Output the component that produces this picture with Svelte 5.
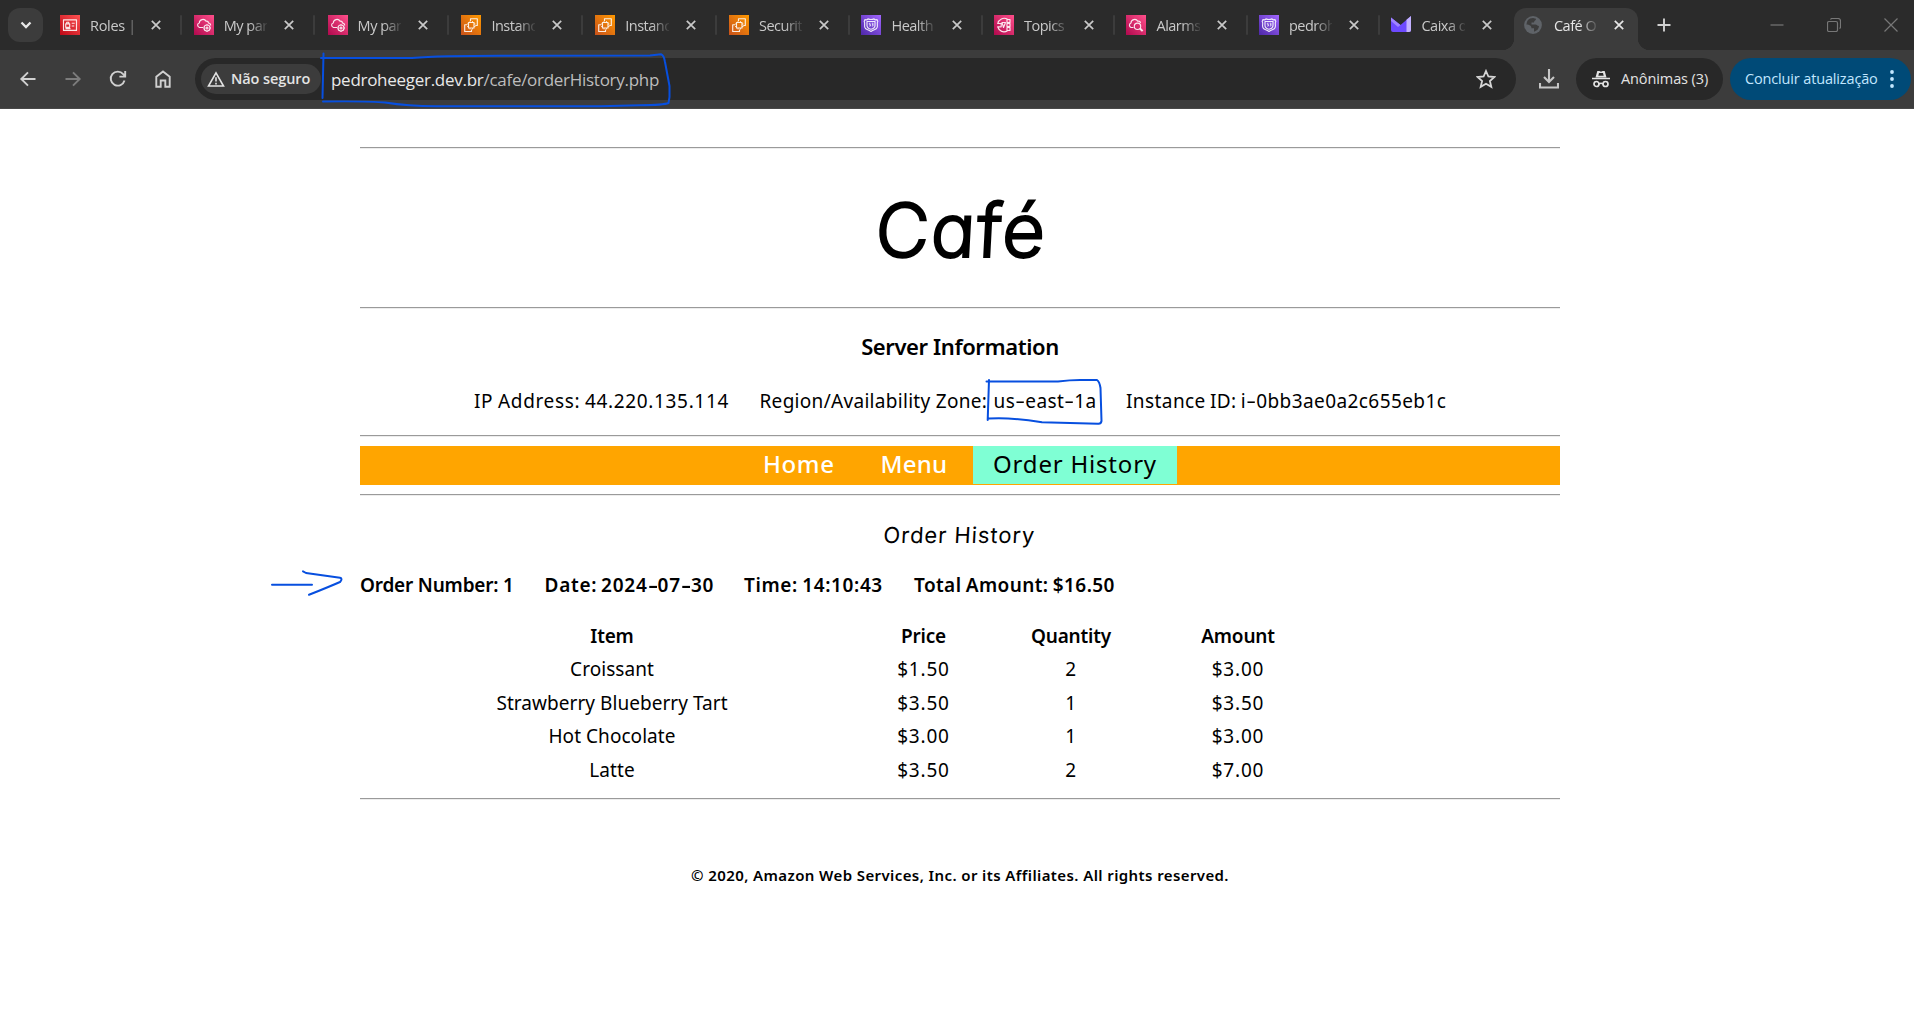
<script>
  const tabs = [
    { icon: 'iam', title: 'Roles |' },
    { icon: 'cloud', title: 'My par' },
    { icon: 'cloud', title: 'My par' },
    { icon: 'ec2', title: 'Instanc' },
    { icon: 'ec2', title: 'Instanc' },
    { icon: 'ec2', title: 'Securit' },
    { icon: 'route', title: 'Health' },
    { icon: 'sns', title: 'Topics' },
    { icon: 'watch', title: 'Alarms' },
    { icon: 'route', title: 'pedroh' },
    { icon: 'mail', title: 'Caixa d' },
    { icon: 'globe', title: 'Café O', active: true }
  ];
  const fills = {
    iam: 'url(#red)', cloud: 'url(#pink)', ec2: 'url(#orange)',
    route: 'url(#purple)', sns: 'url(#pink)', watch: 'url(#pink)'
  };
  const rows = [
    ['Croissant', '$1.50', '2', '$3.00'],
    ['Strawberry Blueberry Tart', '$3.50', '1', '$3.50'],
    ['Hot Chocolate', '$3.00', '1', '$3.00'],
    ['Latte', '$3.50', '2', '$7.00']
  ];
</script>

<svg class="defs" width="0" height="0">
  <defs>
    <linearGradient id="red" x1="0" y1="1" x2="1" y2="0"><stop offset="0" stop-color="#bd0816" /><stop offset="1" stop-color="#ff5252" /></linearGradient>
    <linearGradient id="pink" x1="0" y1="1" x2="1" y2="0"><stop offset="0" stop-color="#b0084d" /><stop offset="1" stop-color="#ff4f8b" /></linearGradient>
    <linearGradient id="orange" x1="0" y1="1" x2="1" y2="0"><stop offset="0" stop-color="#c8511b" /><stop offset="1" stop-color="#ff9900" /></linearGradient>
    <linearGradient id="purple" x1="0" y1="1" x2="1" y2="0"><stop offset="0" stop-color="#4d27a8" /><stop offset="1" stop-color="#a166ff" /></linearGradient>
  </defs>
</svg>

<div class="browser">
  <header class="strip">
    <button class="search" aria-label="Tabs">
      <svg width="12" height="8" viewBox="0 0 12 8"><path d="M1.5 1.5 6 6l4.500-4.500" fill="none" stroke="#e8e8e8" stroke-width="2.300" /></svg>
    </button>
    <div class="tabs">
      {#each tabs as tab, i}
        <div class="tab" class:wide={i < 5} class:active={tab.active} class:divided={i < 10}>
          <svg class="fav" viewBox="0 0 20 20">
            {#if fills[tab.icon]}<rect width="20" height="20" fill={fills[tab.icon]} />{/if}
            <g fill="none" stroke="#fff" stroke-opacity=".88" stroke-width="1.150" stroke-linejoin="round">
              {#if tab.icon === 'iam'}
                <path d="M3.500 4.800h13v10.600h-13zM5.700 8.800h4v3.500h-4zM6.700 8.700V7.200h2v1.500M11.700 8.200h3M11.700 11h2.500M5.500 13.600h5" />
              {:else if tab.icon === 'cloud'}
                <path d="M9 12.500H5.500C3 11.500 3 8.500 5.300 8c0-3.500 5-5 6.800-1.700 1.500-.5 2.300.5 2.300 1.700 2 .3 2.300 1.500 2.200 2.500" />
                <circle cx="13" cy="13" r="3" /><circle cx="13" cy="13" r="1" /><path d="M13 9.200v1M13 16v1M9.500 13h1M16 13h1" />
              {:else if tab.icon === 'ec2'}
                <path d="M7.500 7.500h5.500v5.500H7.500zM9.500 6V3.700h6.800v6.800h-2M10.500 14.500v2H3.700V9.700H6" />
                <path d="M9 6v1.500M11.500 6v1.500M9 13v1.500M11.500 13v1.500M6 9h1.500M6 11.500h1.500M13 9h1.500M13 11.500h1.500" stroke-width=".8" />
              {:else if tab.icon === 'route'}
                <path d="M4 4.500c1 .6 2.300.4 3-.6 2 .8 4 .8 6 0 .7 1 2 1.200 3 .6l.8 2c-1.600 2 1 5-1.300 7-1.600 1.500-3.500 1.500-5.500 3-2-1.500-3.900-1.500-5.500-3-2.300-2 .3-5-1.300-7z" />
                <path d="M6 6.500h8v4c0 2-2 3.300-4 3.800-2-.5-4-1.800-4-3.800z" /><path d="M9.500 8.200H8.300v1.200h1.200v1.600H8M10.800 8.200H12v2.800h-1.200M11 9.600h1" stroke-width=".8" />
              {:else if tab.icon === 'sns'}
                <path d="M13.500 4.300C9.500 1.800 4.500 4.500 3.800 8.500M3.800 12c1.200 4.500 6 6 9.700 3.700M3.200 8.500h4v3.300h-4M8 7.500h3.500L9.500 12.500zM13 4.500h3v3h-3zM13 8.500h3v3h-3zM13 12.500h3v3h-3z" />
              {:else if tab.icon === 'watch'}
                <path d="M7.500 12.500H5C3 11.500 2.800 8.800 5 8c0-3.500 5-5 6.800-1.700 1.700-.5 2.600.5 2.600 1.700" /><circle cx="11.500" cy="11.300" r="3.200" /><path d="m14 13.500 2.600 2.600" stroke-width="2" />
              {/if}
            </g>
            {#if tab.icon === 'mail'}
              <path d="M0 2.500 9.500 10 20 1v14a2 2 0 0 1-2 2H2a2 2 0 0 1-2-2z" fill="#6d4aff" />
              <path d="M15.500 4.800 20 1v14a2 2 0 0 1-2 2h-2.500z" fill="#c3b1ff" /><path d="M0 2.500 9.500 10 7 12 0 6z" fill="#9f84ff" />
            {:else if tab.icon === 'globe'}
              <circle cx="9" cy="10" r="8.900" fill="#5f6368" />
              <path d="M6 3.500 9 3l3 .8c0 2-2 1.700-2 3.700H7.500v2h4c1.500 0 1.500 1.500 3.500 1.500-.2 3-2 4.800-5 5.700v-3.500H7.500c0-3-2.500-3.200-5-3.700.2-3 1.300-5 3.500-6z" fill="#3c3c3c" />
            {/if}
          </svg>
          <span class="title" class:solid={i === 0}>{tab.title}</span>
          <svg class="close" width="10" height="10" viewBox="0 0 10 10"><path d="m.8.8 8.400 8.400m0-8.400L.8 9.200" stroke="currentColor" stroke-width="1.700" /></svg>
        </div>
      {/each}
    </div>
    <svg class="plus" width="14" height="14" viewBox="0 0 14 14"><path d="M7 .5v13M.5 7h13" stroke="#d0d0d0" stroke-width="1.900" /></svg>
    <div class="window">
      <svg width="14" height="14" viewBox="0 0 14 14"><path d="M.5 7h13" /></svg>
      <svg width="14" height="14" viewBox="0 0 14 14"><rect x=".5" y="3.500" width="10" height="10" rx="1.500" /><path d="M3.500 1.500Q4 .5 5 .5h6q2.500 0 2.500 2.500v6q0 1-1 1.500" /></svg>
      <svg width="14" height="14" viewBox="0 0 14 14"><path d="m.5.5 13 13m0-13-13 13" /></svg>
    </div>
  </header>

  <div class="toolbar">
    <nav class="controls">
      <svg viewBox="0 0 20 20"><path d="M17.500 10H3.500M10 3.300 3.300 10l6.700 6.700" /></svg>
      <svg class="dim" viewBox="0 0 20 20"><path d="M2.500 10h14M10 3.300l6.700 6.700-6.700 6.700" /></svg>
      <svg viewBox="0 0 20 20"><path d="M16.500 11.500A7 7 0 1 1 15.200 5.200L17 7.200M17.200 2v5.600h-5.800" /></svg>
      <svg viewBox="0 0 20 20"><path d="M3.300 17.800V7.700L10 2.500l6.700 5.200v10.100h-4.400v-6.300H7.700v6.300z" /></svg>
    </nav>
    <div class="address">
      <span class="chip">
        <svg width="18" height="16" viewBox="0 0 18 16"><path d="M9 1.800 16.500 15h-15zM9 6.200v4.300M9 11.800v1.700" fill="none" stroke="#e3e3e3" stroke-width="1.600" /></svg>
        Não seguro
      </span>
      <span class="url">pedroheeger.dev.br<span>/cafe/orderHistory.php</span></span>
      <svg class="star" width="20" height="20" viewBox="0 0 20 20"><path d="m10 2 2.400 5.500 6 .5-4.500 4 1.400 5.800L10 14.700l-5.300 3.100L6.100 12 1.600 8l6-.5z" fill="none" stroke="#d6d6d6" stroke-width="1.800" /></svg>
    </div>
    <svg class="download" width="20" height="20" viewBox="0 0 20 20"><path d="M10 0v13M5 8l5 5 5-5M1 14v4.500h18V14" fill="none" stroke="#c7c7c7" stroke-width="2.100" /></svg>
    <span class="pill">
      <svg width="18" height="18" viewBox="0 0 18 18"><path d="M3.500 7.500 5.300 1h2l1.700.8 1.700-.8h2l1.800 6.500z" fill="#e3e3e3" /><path d="M6.300 5.800 7 3h4l.7 2.800z" fill="#282828" /><path d="M0 8.500h18M7 14q2-1.500 4 0" fill="none" stroke="#e3e3e3" stroke-width="1.700" /><circle cx="4.500" cy="14" r="2.500" fill="none" stroke="#e3e3e3" stroke-width="1.700" /><circle cx="13.500" cy="14" r="2.500" fill="none" stroke="#e3e3e3" stroke-width="1.700" /></svg>
      Anônimas (3)
    </span>
    <span class="update">Concluir atualização
      <svg width="4" height="18" viewBox="0 0 4 18" fill="#c2e7ff"><circle cx="2" cy="2" r="1.900" /><circle cx="2" cy="9" r="1.900" /><circle cx="2" cy="16" r="1.900" /></svg>
    </span>
  </div>

  <main>
    <section class="brand"><h1>Café</h1></section>
    <section class="server">
      <h2>Server Information</h2>
      <p><span class="ip">IP Address: 44.220.135.114</span><span class="zone">Region/Availability Zone:</span><span class="value">us<i>-</i>east<i>-</i>1a</span><span class="instance">Instance ID: i<i>-</i>0bb3ae0a2c655eb1c</span></p>
    </section>
    <section class="menu">
      <nav><span class="home">Home</span><span class="food">Menu</span><span class="current">Order History</span></nav>
    </section>
    <section class="orders">
      <h3>Order History</h3>
      <div class="summary"><span class="number">Order Number: 1</span><span class="date">Date: 2024<i>-</i>07<i>-</i>30</span><span class="time">Time: 14:10:43</span><span class="total">Total Amount: $16.50</span></div>
      <div class="grid head"><span>Item</span><span>Price</span><span>Quantity</span><span>Amount</span></div>
      {#each rows as row}
        <div class="grid">{#each row as cell}<span>{cell}</span>{/each}</div>
      {/each}
    </section>
    <footer>© 2020, Amazon Web Services, Inc. or its Affiliates. All rights reserved.</footer>
  </main>

  <svg class="ink" viewBox="0 0 1914 1018">
    <path d="M323.500 53.500 322.500 98M321 58H412Q440 55.800 500 55.800L650 55.500 661 54.200Q664 55 665 62L669.500 86V97L668.500 103Q664 105 640 105.300L600 106.200H440Q410 106.500 385 102.500 370 101 323 101.500" />
    <path d="M989 380 987.700 420M986.500 381.500H1058Q1070 380 1080 380H1097Q1099.500 381.500 1100.500 388L1101.500 421Q1101 424 1098 423.700L1042 422.300Q1010 417 989 418.500" />
    <path d="M272 584.700H312M303 571.300 306 573 340 577.800Q343 578.500 340 582 331 586 309 594.800" />
  </svg>
</div>

<style>
  :global(body) { margin: 0; background: #fff; }
  .defs { position: absolute; }
  .browser { position: relative; width: 1914px; height: 1018px; overflow: hidden; background: #fff; font-family: "Noto Sans", "Open Sans", sans-serif; }
  .strip { display: flex; height: 50px; background: #2b2b2b; align-items: center; }
  .search { width: 35px; height: 34px; margin: 0 7px 0 8px; padding: 0; border: 0; border-radius: 12px; background: #3c3c3c; display: grid; place-items: center; flex: none; }
  .tabs { display: flex; height: 50px; }
  .tab { position: relative; box-sizing: border-box; width: 132.500px; display: flex; align-items: center; padding-left: 10px; color: #c9c9c9; font: 14.500px "Open Sans", sans-serif; }
  .wide { width: 133.800px; }
  .divided::after { content: ""; position: absolute; left: 129.500px; top: 15px; width: 2px; height: 20px; border-radius: 1px; background: #3c3c3c; }
  .fav { width: 20px; height: 20px; flex: none; margin-right: 10px; }
  .title { width: 43.500px; flex: none; white-space: nowrap; letter-spacing: -.5px; -webkit-mask-image: linear-gradient(90deg, #000 60%, transparent 105%); mask-image: linear-gradient(90deg, #000 60%, transparent 105%); }
  .solid { letter-spacing: -.3px; -webkit-mask-image: linear-gradient(90deg, #000 85%, rgba(0, 0, 0, .3)); mask-image: linear-gradient(90deg, #000 85%, rgba(0, 0, 0, .3)); }
  .close { margin-left: 17px; flex: none; }
  .active { color: #e6e6e6; width: 124px; height: 42px; margin: 8px 0 0; padding-bottom: 8px; background: #3c3c3c; border-radius: 12px 12px 0 0; }
  .active::before, .active::after { content: ""; position: absolute; bottom: 0; width: 12px; height: 12px; }
  .active::before { left: -12px; background: radial-gradient(circle at 0 0, transparent 12px, #3c3c3c 12.500px); }
  .active::after { right: -12px; background: radial-gradient(circle at 100% 0, transparent 12px, #3c3c3c 12.500px); }
  .plus { margin-left: 19px; flex: none; }
  .window { display: flex; gap: 43px; margin-left: auto; margin-right: 16px; }
  .window svg { fill: none; stroke: #777; stroke-width: 1.200; }

  .toolbar { display: flex; box-sizing: border-box; height: 59px; padding: 8px 2px 9px 18px; align-items: center; background: #3c3c3c; border-bottom: 1px solid #484848; color: #e3e3e3; }
  .controls { display: flex; gap: 25px; width: 177px; flex: none; }
  .controls svg { width: 20px; height: 20px; fill: none; stroke: #d0d0d0; stroke-width: 1.900; }
  .controls .dim { stroke: #7c7c7c; }
  .address { display: flex; box-sizing: border-box; width: 1321px; height: 42px; padding: 0 20px 0 6px; border-radius: 21px; background: #282828; align-items: center; flex: none; }
  .chip { box-sizing: border-box; display: flex; width: 120px; height: 30px; padding-left: 6px; gap: 6px; align-items: center; border-radius: 15px; background: #3c3c3c; font: 600 14.500px "Open Sans", sans-serif; letter-spacing: -.1px; white-space: nowrap; }
  .url { margin-left: 10px; padding-top: 1px; font: 17px "Open Sans", sans-serif; letter-spacing: -.28px; color: #e8e8e8; }
  .url span { color: #bdbdbd; }
  .star { margin-left: auto; }
  .download { margin: 0 17px 0 23px; flex: none; }
  .pill, .update { box-sizing: border-box; display: flex; height: 42px; align-items: center; border-radius: 21px; white-space: nowrap; flex: none; font: 14.500px "Open Sans", sans-serif; }
  .pill { width: 147px; padding-left: 16px; gap: 11px; background: #282828; letter-spacing: -.1px; }
  .update { width: 181px; margin-left: 7px; padding-left: 15px; gap: 12px; background: #004a77; color: #c2e7ff; letter-spacing: -.15px; }

  main { width: 1200px; margin: 38px 0 0 360px; color: #000; font-size: 19px; }
  section { box-sizing: border-box; border-top: 1px solid #9a9a9a; box-shadow: inset 0 1px #ededed; }
  h1, h2, h3, p { margin: 0; font-weight: 400; text-align: center; }
  .brand { height: 160px; }
  h1 { padding: 29px 0 0 4px; font: 300 74px/106px Inter, "Open Sans", sans-serif; font-feature-settings: "cv11"; letter-spacing: 1.500px; -webkit-text-stroke: 2.200px #000; stroke-linejoin: round; transform: skewX(-3deg); }
  .server { height: 128px; }
  h2 { padding-top: 23px; font-size: 22px; line-height: 30px; font-weight: 600; letter-spacing: -.4px; }
  i { display: inline-block; font-style: normal; letter-spacing: 0; padding: 0 2px; transform: scaleX(1.600); }
  p { display: flex; padding: 27px 0 0 114px; line-height: 26px; white-space: nowrap; text-align: left; }
  .ip { width: 285.500px; letter-spacing: .65px; word-spacing: -.8px; }
  .zone { width: 234px; letter-spacing: .3px; }
  .value { width: 132.500px; letter-spacing: .4px; }
  .instance { letter-spacing: .42px; word-spacing: -1.200px; }
  .menu { height: 59px; padding-top: 10px; }
  nav { white-space: nowrap; }
  .menu nav { display: flex; height: 39px; padding-left: 403px; background: orange; color: #fff; font-size: 24px; line-height: 35px; }
  .home { width: 117.500px; font-weight: 500; letter-spacing: .6px; }
  .food { width: 92.500px; font-weight: 500; letter-spacing: .2px; }
  .current { width: 204px; height: 38px; background: #7fffd4; color: #000; text-align: center; letter-spacing: .8px; }
  .orders { height: 305px; border-bottom: 1px solid #9a9a9a; box-shadow: inset 0 1px #ededed, 0 1px #ededed; }
  h3 { padding-top: 24px; font: 22px/32px Inter, "Open Sans", sans-serif; font-feature-settings: "cv11"; letter-spacing: .9px; transform: skewX(-3deg); }
  .summary { display: grid; grid-template-columns: 184.500px 199.500px 170px 300px; margin-top: 21px; line-height: 26px; font-weight: 600; white-space: nowrap; }
  .number { letter-spacing: -.2px; }
  .date { letter-spacing: .75px; word-spacing: -2px; }
  .time { letter-spacing: .6px; word-spacing: -1px; }
  .total { letter-spacing: .4px; word-spacing: -1px; }
  .grid { display: grid; grid-template-columns: 504px 119px 176px 158px; height: 33.400px; line-height: 35px; text-align: center; white-space: nowrap; letter-spacing: .05px; }
  .grid:not(.head) span:nth-child(n + 2) { letter-spacing: .8px; }
  .grid.head { margin-top: 21px; line-height: 34px; font-weight: 600; letter-spacing: -.2px; }
  footer { padding-top: 66px; font-size: 15px; line-height: 20px; font-weight: 600; text-align: center; letter-spacing: .4px; }
  .ink { position: absolute; inset: 0; width: 1914px; height: 1018px; fill: none; stroke: #074fdf; stroke-width: 2; stroke-linecap: round; stroke-linejoin: round; pointer-events: none; }
</style>
